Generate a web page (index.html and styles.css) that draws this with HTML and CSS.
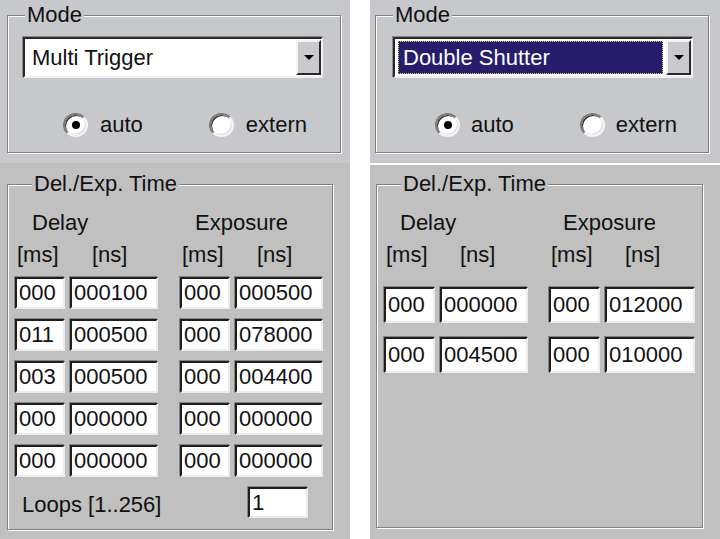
FILE: index.html
```html
<!DOCTYPE html>
<html lang="en">
<head>
    <meta charset="UTF-8">
    <title>Delay / Exposure Settings</title>
    <link rel="stylesheet" href="styles.css">
</head>
<body>

<div class="panel panel-left">
    <div class="top">
        <div class="group mode">
            <span class="title">Mode</span>
            <div class="combo">
                <span class="combo-text">Multi Trigger</span>
                <span class="combo-btn"><svg width="10" height="6" viewBox="0 0 10 6"><polygon points="0,0 10,0 5,5" fill="#000"/></svg></span>
            </div>
            <div class="radios">
                <label class="radio checked"><span class="dot"></span>auto</label>
                <label class="radio"><span class="dot"></span>extern</label>
            </div>
        </div>
    </div>
    <div class="bottom">
        <div class="group times">
            <span class="title">Del./Exp. Time</span>
            <div class="line heads">
                <div class="pair"><div class="cell ms delay">Delay</div><div class="cell ns"></div></div>
                <div class="pair exp"><div class="cell ms expo">Exposure</div><div class="cell ns"></div></div>
            </div>
            <div class="line units">
                <div class="pair"><div class="cell ms">[ms]</div><div class="cell ns">[ns]</div></div>
                <div class="pair exp"><div class="cell ms">[ms]</div><div class="cell ns">[ns]</div></div>
            </div>
            <div class="rows">
                <div class="line">
                    <div class="pair"><div class="field ms">000</div><div class="field ns">000100</div></div>
                    <div class="pair exp"><div class="field ms">000</div><div class="field ns">000500</div></div>
                </div>
                <div class="line">
                    <div class="pair"><div class="field ms">011</div><div class="field ns">000500</div></div>
                    <div class="pair exp"><div class="field ms">000</div><div class="field ns">078000</div></div>
                </div>
                <div class="line">
                    <div class="pair"><div class="field ms">003</div><div class="field ns">000500</div></div>
                    <div class="pair exp"><div class="field ms">000</div><div class="field ns">004400</div></div>
                </div>
                <div class="line">
                    <div class="pair"><div class="field ms">000</div><div class="field ns">000000</div></div>
                    <div class="pair exp"><div class="field ms">000</div><div class="field ns">000000</div></div>
                </div>
                <div class="line">
                    <div class="pair"><div class="field ms">000</div><div class="field ns">000000</div></div>
                    <div class="pair exp"><div class="field ms">000</div><div class="field ns">000000</div></div>
                </div>
            </div>
            <div class="loops">
                <span>Loops [1..256]</span>
                <div class="field">1</div>
            </div>
        </div>
    </div>
</div>

<div class="panel panel-right">
    <div class="top">
        <div class="group mode">
            <span class="title">Mode</span>
            <div class="combo focused">
                <span class="combo-text">Double Shutter</span>
                <span class="combo-btn"><svg width="10" height="6" viewBox="0 0 10 6"><polygon points="0,0 10,0 5,5" fill="#000"/></svg></span>
            </div>
            <div class="radios">
                <label class="radio checked"><span class="dot"></span>auto</label>
                <label class="radio"><span class="dot"></span>extern</label>
            </div>
        </div>
    </div>
    <div class="bottom">
        <div class="group times">
            <span class="title">Del./Exp. Time</span>
            <div class="line heads">
                <div class="pair"><div class="cell ms delay">Delay</div><div class="cell ns"></div></div>
                <div class="pair exp"><div class="cell ms expo">Exposure</div><div class="cell ns"></div></div>
            </div>
            <div class="line units">
                <div class="pair"><div class="cell ms">[ms]</div><div class="cell ns">[ns]</div></div>
                <div class="pair exp"><div class="cell ms">[ms]</div><div class="cell ns">[ns]</div></div>
            </div>
            <div class="rows">
                <div class="line">
                    <div class="pair"><div class="field ms">000</div><div class="field ns">000000</div></div>
                    <div class="pair exp"><div class="field ms">000</div><div class="field ns">012000</div></div>
                </div>
                <div class="line">
                    <div class="pair"><div class="field ms">000</div><div class="field ns">004500</div></div>
                    <div class="pair exp"><div class="field ms">000</div><div class="field ns">010000</div></div>
                </div>
            </div>
        </div>
    </div>
</div>

</body>
</html>
```

FILE: styles.css
```css
body {
    margin: 0;
    display: flex;
    gap: 20px;
    height: 539px;
    overflow: hidden;
    background: #fff;
    font-family: "Liberation Sans", Arial, sans-serif;
    font-size: 22px;
    line-height: 24px;
    color: #111;
}
.panel {
    width: 350px;
    display: flex;
    flex-direction: column;
}
.top {
    height: 163px;
    box-sizing: border-box;
    background: #c6c8cb;
    padding: 15px 0 0 7px;
}
.panel-right .top {
    height: 165px;
    padding-left: 5px;
    border-bottom: 2px solid #fff;
}
.bottom {
    flex: 1;
    background: #c0c0c0;
    padding: 21px 0 0 7px;
}
.panel-right .bottom {
    padding: 19px 0 0 6px;
}

/* etched group box */
.group {
    box-sizing: border-box;
    border: 1px solid #808080;
    box-shadow: inset 1px 1px 0 #fff, 1px 1px 0 #fff;
    background: inherit;
}
.title {
    display: block;
    width: fit-content;
    margin: -13px 0 0 17px;
    padding: 0 2px;
    background: inherit;
    white-space: nowrap;
}
.mode {
    width: 334px;
    height: 138px;
}
.times {
    width: 326px;
    height: 346px;
    padding-left: 7px;
}
.panel-right .times {
    width: 327px;
    height: 344px;
}

/* combo box */
.combo {
    display: flex;
    align-items: center;
    width: 300px;
    height: 41px;
    box-sizing: border-box;
    margin: 10px 0 0 15px;
    background: #fff;
    border: 2px solid;
    border-color: #2a2a2a #f0f0f0 #f0f0f0 #2a2a2a;
    box-shadow: -1px -1px 0 #8a8a8a;
}
.panel-right .combo {
    margin-left: 17px;
}
.combo-text {
    flex: 1;
    padding-left: 7px;
}
.combo.focused .combo-text {
    margin: 0 3px;
    height: 33px;
    line-height: 33px;
    padding-left: 5px;
    background: #261d6d;
    color: #fff;
    outline: 1px dotted #e6dc5a;
    outline-offset: -1px;
}
.combo-btn {
    width: 25px;
    height: 35px;
    box-sizing: border-box;
    display: grid;
    place-items: center;
    background: #c8cacd;
    border: 2px solid;
    border-color: #f4f4f4 #2a2a2a #2a2a2a #f4f4f4;
}

/* radio buttons */
.radios {
    display: flex;
    align-items: center;
    margin: 35px 0 0 55px;
}
.panel-right .radios {
    margin-left: 59px;
}
.radio {
    display: flex;
    align-items: center;
    gap: 12px;
}
.panel-right .radio {
    gap: 11px;
}
.radio + .radio {
    margin-left: 66px;
}
.dot {
    width: 25px;
    height: 24px;
    box-sizing: border-box;
    border-radius: 50%;
    display: grid;
    place-items: center;
    background: #fff;
    border: 2px solid;
    border-color: #7a7a7a #f4f4f4 #f4f4f4 #7a7a7a;
    box-shadow: inset 1px 1px 0 #222, inset -1px -1px 0 #d8d8d8;
}
.checked .dot::after {
    content: "";
    width: 8px;
    height: 8px;
    border-radius: 50%;
    background: #000;
}

/* delay / exposure table */
.line {
    display: flex;
    gap: 22px;
}
.panel-right .line {
    gap: 21px;
}
.pair {
    display: flex;
    gap: 5px;
}
.ms { width: 50px; }
.ns { width: 88px; }
.panel-right .ms { width: 51px; }
.panel-right .exp .ns { width: 90px; }
.cell {
    box-sizing: border-box;
    white-space: nowrap;
}
.heads {
    margin-top: 15px;
}
.heads .delay { padding-left: 17px; }
.heads .expo { padding-left: 15px; }
.panel-right .heads .delay { padding-left: 16px; }
.panel-right .heads .expo { padding-left: 14px; }
.units {
    margin-top: 8px;
}
.units .ms { padding-left: 2px; }
.units .ns { padding-left: 22px; }
.panel-right .units .ns { padding-left: 20px; }
.rows {
    display: flex;
    flex-direction: column;
    gap: 10px;
    margin-top: 10px;
}
.panel-right .rows {
    gap: 14px;
    margin-top: 20px;
}
.field {
    height: 32px;
    box-sizing: border-box;
    padding-left: 2px;
    line-height: 28px;
    background: #fff;
    border: 2px solid;
    border-color: #1e1e1e #ececec #ececec #1e1e1e;
    box-shadow: -1px -1px 0 #858585;
}
.panel-right .field {
    height: 36px;
    line-height: 32px;
}
.loops {
    display: flex;
    align-items: center;
    margin-top: 10px;
    padding-left: 7px;
}
.loops span {
    padding-top: 5px;
}
.loops .field {
    width: 60px;
    height: 31px;
    line-height: 27px;
    margin: 0 24px 0 auto;
}
```
